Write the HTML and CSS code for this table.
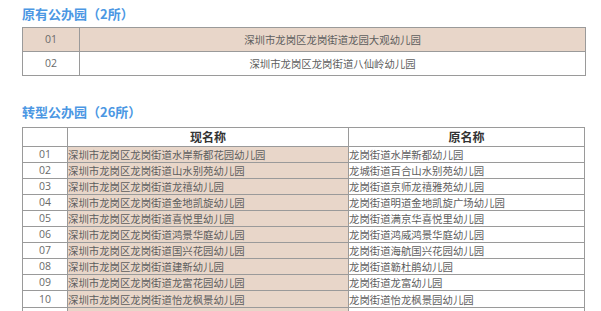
FILE: index.html
```html
<!DOCTYPE html>
<html lang="zh">
<head>
<meta charset="utf-8">
<link rel="stylesheet" href="styles.css">
</head>
<body>
<div class="page">
  <h2 class="title title-first">原有公办园（2所）</h2>
  <table class="tbl tbl-old">
    <colgroup><col class="c-no1"><col></colgroup>
    <tr class="pink"><td class="no">01</td><td class="center">深圳市龙岗区龙岗街道龙园大观幼儿园</td></tr>
    <tr><td class="no">02</td><td class="center">深圳市龙岗区龙岗街道八仙岭幼儿园</td></tr>
  </table>

  <h2 class="title title-second">转型公办园（26所）</h2>
  <table class="tbl tbl-new">
    <colgroup><col class="c-no2"><col class="c-now"><col></colgroup>
    <tr class="head"><th></th><th>现名称</th><th>原名称</th></tr>
    <tr><td class="no">01</td><td class="now">深圳市龙岗区龙岗街道水岸新都花园幼儿园</td><td>龙岗街道水岸新都幼儿园</td></tr>
    <tr><td class="no">02</td><td class="now">深圳市龙岗区龙岗街道山水别苑幼儿园</td><td>龙城街道百合山水别苑幼儿园</td></tr>
    <tr><td class="no">03</td><td class="now">深圳市龙岗区龙岗街道龙禧幼儿园</td><td>龙岗街道京师龙禧雅苑幼儿园</td></tr>
    <tr><td class="no">04</td><td class="now">深圳市龙岗区龙岗街道金地凯旋幼儿园</td><td>龙岗街道明道金地凯旋广场幼儿园</td></tr>
    <tr><td class="no">05</td><td class="now">深圳市龙岗区龙岗街道喜悦里幼儿园</td><td>龙岗街道满京华喜悦里幼儿园</td></tr>
    <tr><td class="no">06</td><td class="now">深圳市龙岗区龙岗街道鸿景华庭幼儿园</td><td>龙岗街道鸿威鸿景华庭幼儿园</td></tr>
    <tr><td class="no">07</td><td class="now">深圳市龙岗区龙岗街道国兴花园幼儿园</td><td>龙岗街道海航国兴花园幼儿园</td></tr>
    <tr><td class="no">08</td><td class="now">深圳市龙岗区龙岗街道建新幼儿园</td><td>龙岗街道簕杜鹃幼儿园</td></tr>
    <tr><td class="no">09</td><td class="now">深圳市龙岗区龙岗街道龙富花园幼儿园</td><td>龙岗街道龙富幼儿园</td></tr>
    <tr class="tall"><td class="no">10</td><td class="now">深圳市龙岗区龙岗街道怡龙枫景幼儿园</td><td class="low">龙岗街道怡龙枫景园幼儿园</td></tr>
    <tr><td class="no"></td><td class="now"></td><td></td></tr>
  </table>
</div>
</body>
</html>
```

FILE: styles.css
```css
html, body {
  margin: 0;
  padding: 0;
  background: #ffffff;
}

.page {
  padding: 5px 15px 0 22px;
  font-family: "Noto Sans CJK SC", "Noto Sans", sans-serif;
}

.title {
  margin: 0;
  font-size: 13px;
  line-height: 17px;
  font-weight: bold;
  color: #4b97e3;
}

.title-first {
  margin-bottom: 5px;
}

.title-second {
  margin-top: 27px;
  margin-bottom: 7px;
}

.tbl {
  border-collapse: collapse;
  width: 564px;
  color: #5e5e5e;
  font-size: 10.4px;
  table-layout: fixed;
}

.tbl td, .tbl th {
  border: 1px solid #9a9a9a;
  padding: 0;
  white-space: nowrap;
  overflow: hidden;
}

.c-no1 { width: 57px; }
.c-no2 { width: 45px; }
.c-now { width: 281px; }

.tbl-old td {
  height: 23px;
  line-height: 23px;
}

.tbl-old .pink td {
  background: #e8d6c9;
}

.no {
  text-align: center;
  color: #6a6a6a;
  font-family: "Open Sans", "Noto Sans", sans-serif;
  font-size: 10.5px;
}

.center {
  text-align: center;
}

.tbl-new {
  width: 563px;
}

.tbl-new th {
  height: 18px;
  line-height: 18px;
  font-size: 12px;
  font-weight: bold;
  color: #333;
  text-align: center;
}

.tbl-new td {
  height: 15px;
  line-height: 15px;
  text-align: left;
}

.tbl-new td.no {
  text-align: center;
}

.tbl-new td.now {
  background: #e8d6c9;
}

.tbl-new .tall td {
  height: 16px;
}

.tbl-new td.low {
  vertical-align: bottom;
  line-height: 14px;
}
```
